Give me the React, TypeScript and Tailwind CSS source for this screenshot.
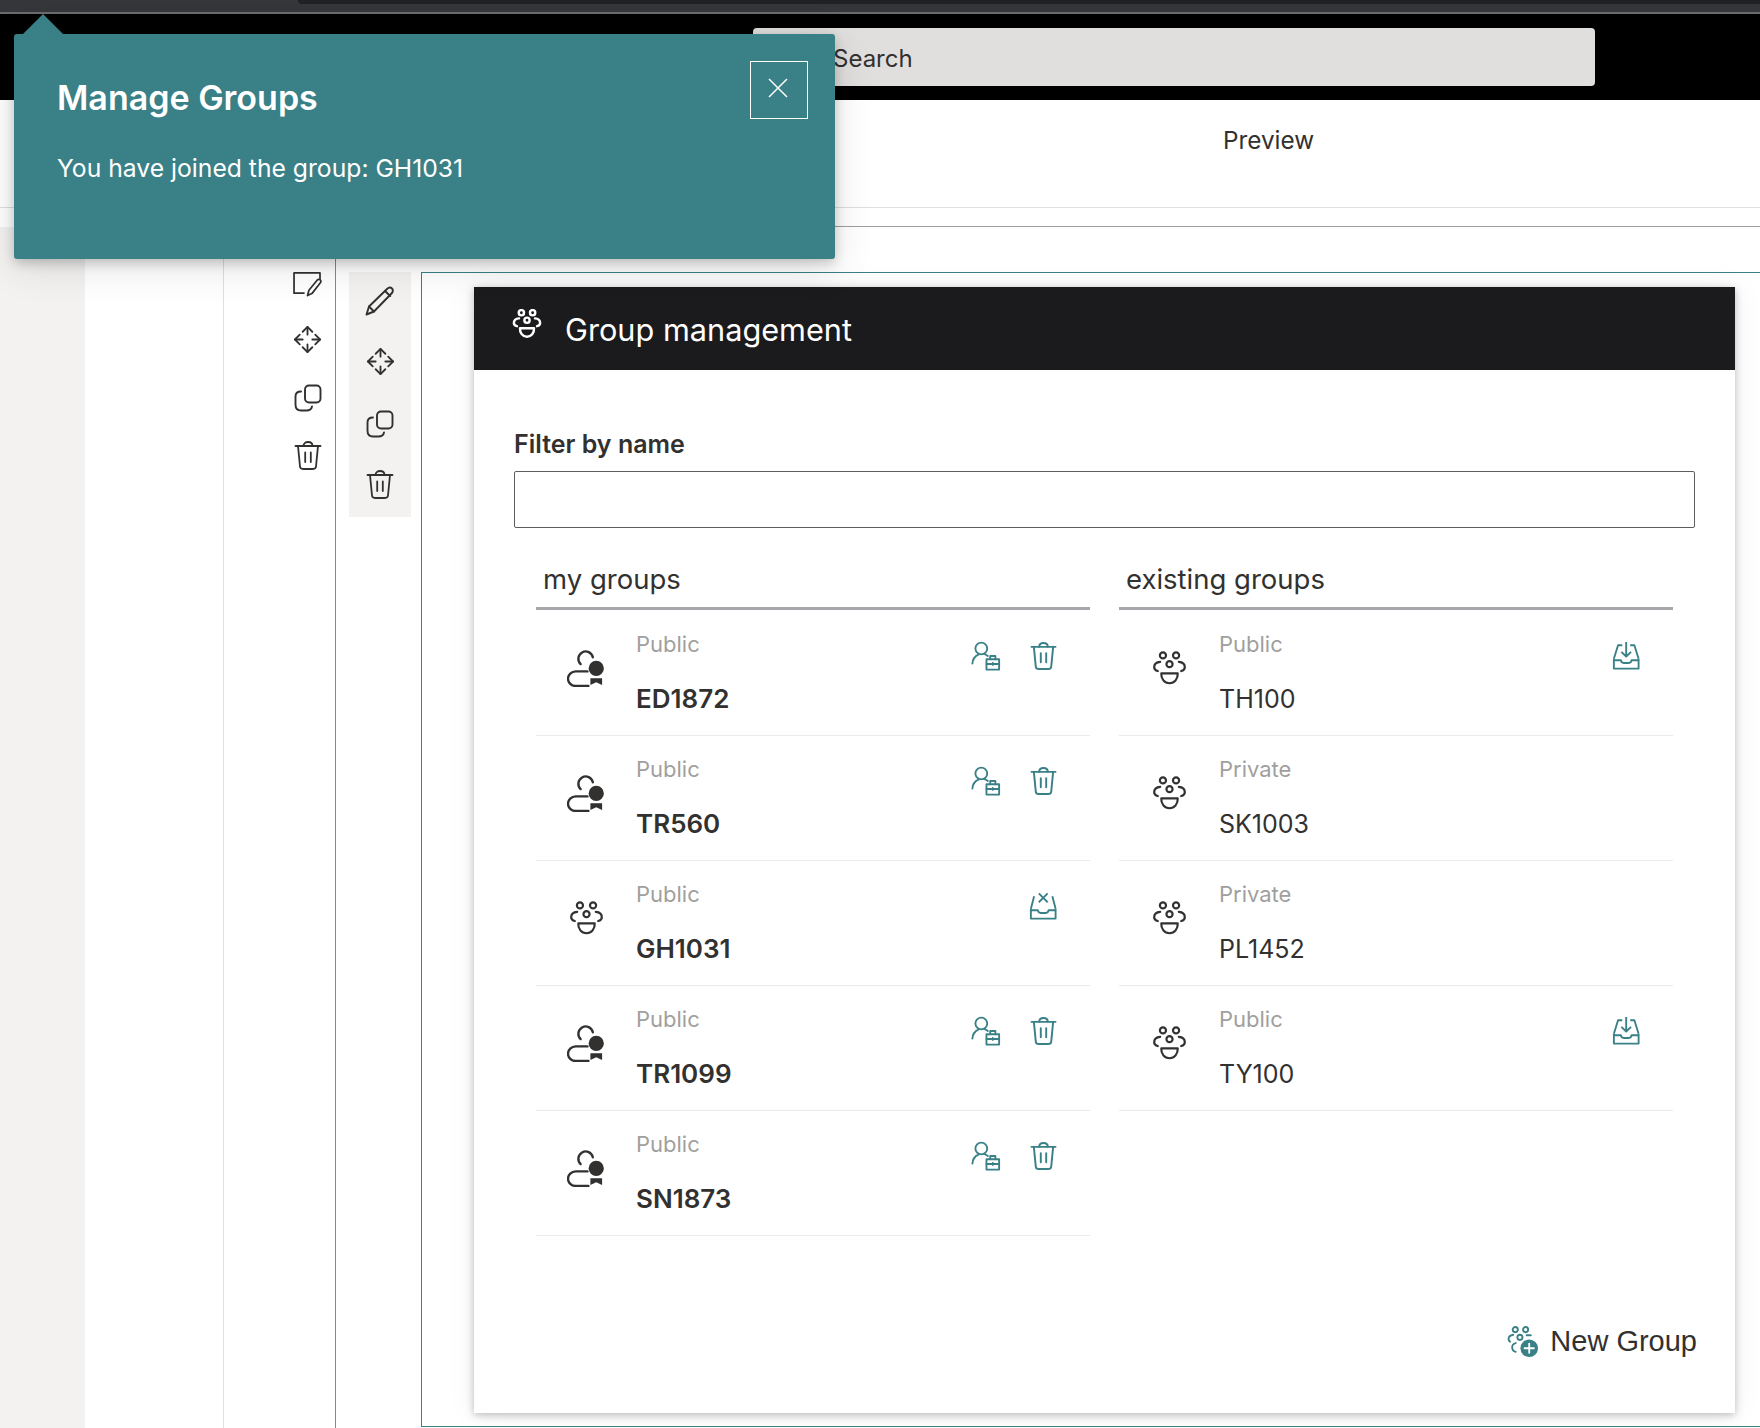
import React from "react";

const s = { fill: "none", stroke: "currentColor", strokeLinecap: "round" as const, strokeLinejoin: "round" as const };

function GroupIcon({ className = "", w = 2 }: { className?: string; w?: number }) {
  return (
    <svg viewBox="0 0 32 32" className={className} {...s} strokeWidth={w}>
      <circle cx="10" cy="4" r="2.800" />
      <circle cx="22" cy="4" r="2.800" />
      <circle cx="16" cy="12" r="2.800" />
      <path d="M7.500 10C4 10.300 2 12.300 2 14.800c0 1.800 1.300 3 3.300 3.500" />
      <path d="M24.500 10c3.500.3 5.500 2.300 5.500 4.800c0 1.800-1.300 3-3.300 3.500" />
      <path d="M8.500 20.500h15c.4 5-3 9-7.500 9s-7.900-4-7.500-9z" />
    </svg>
  );
}

function BadgeIcon({ className = "" }: { className?: string }) {
  return (
    <svg viewBox="0 0 40 40" className={className} {...s} strokeWidth={2.4}>
      <path d="M14 16.500A7.500 7.500 0 1 1 26.500 9.500" />
      <path d="M21 24H9c-4.500 0-8 3.500-8 7.500S4.500 39 9 39h13" />
      <circle cx="30" cy="21" r="7.800" fill="currentColor" stroke="none" />
      <path d="M24 31h12v7l-6-3-6 3z" fill="currentColor" stroke="none" />
    </svg>
  );
}

function PersonCaseIcon({ className = "" }: { className?: string }) {
  return (
    <svg viewBox="0 0 32 32" className={className} {...s} strokeWidth={2}>
      <circle cx="11" cy="8" r="6.300" />
      <path d="M1.500 24c.3-4.500 3-8 6.500-9.500" />
      <path d="M14.500 14c1.500.5 2.500 1.300 3.500 2" />
      <path d="M16.500 19.500h13.500v11h-13.500z" />
      <path d="M20.500 19.500v-3.500h5.500v3.500" />
      <path d="M16.500 24.500h13.500" />
      <path d="M23.200 23.500v2" />
    </svg>
  );
}

function TrashIcon({ className = "", w = 2 }: { className?: string; w?: number }) {
  return (
    <svg viewBox="0 0 28 30" className={className} {...s} strokeWidth={w}>
      <path d="M1.500 5.500h25" />
      <path d="M9.500 5.500C9.500 3 11.500 1.500 14 1.500s4.500 1.500 4.500 4" />
      <path d="M4 5.500l2 20.500c.2 1.700 1.300 2.500 3 2.500h10c1.700 0 2.800-.8 3-2.500l2-20.500" />
      <path d="M11.200 12v9.500M16.800 12v9.500" />
    </svg>
  );
}

function InboxIcon({ kind, className = "" }: { kind: "in" | "x"; className?: string }) {
  return (
    <svg viewBox="0 0 30 30" className={className} {...s} strokeWidth={2} strokeLinecap="butt">
      <path d="M2 18v10.500h26.500V18" />
      <path d="M2 19.500h7.500c.3 2 1.500 3 3 3h5.500c1.500 0 2.700-1 3-3h7.500" />
      {kind === "in" ? (
        <>
          <path d="M2 18L6.500 3.500H11M28.500 18L24 3.500h-4.500" />
          <path d="M15.200 0v15.500M10 10.500l5.200 5 5.200-5" />
        </>
      ) : (
        <>
          <path d="M2 18L5.500 4.500M28.500 18L25 4.500" />
          <path d="M10.500 1.500l9.500 9.500M20 1.500l-9.500 9.500" />
        </>
      )}
    </svg>
  );
}

function NoteIcon({ className = "" }: { className?: string }) {
  return (
    <svg viewBox="0 0 30 26" className={className} {...s} strokeWidth={1.8} strokeLinecap="butt">
      <path d="M28 8V1H1v21h11" />
      <path d="M15 24.500l1.500-5.500L25 8.500c1-1 2.300-1 3.200-.3s1 2 .2 3L20 22z" />
    </svg>
  );
}

function MoveIcon({ className = "" }: { className?: string }) {
  return (
    <svg viewBox="0 0 30 30" className={className} {...s} strokeWidth={1.9}>
      <path d="M15 2v8M15 20v8M2 15h8M20 15h8" />
      <path d="M10 7l5-5 5 5M10 23l5 5 5-5M7 10l-5 5 5 5M23 10l5 5-5 5" />
    </svg>
  );
}

function CopyIcon({ className = "" }: { className?: string }) {
  return (
    <svg viewBox="0 0 28 28" className={className} {...s} strokeWidth={1.9}>
      <rect x="11" y="1.500" width="15.500" height="17" rx="4" />
      <path d="M7 7.500C3.500 7.500 1.500 9.500 1.500 12.500v8c0 3.500 2 6 5.500 6h5.500c3 0 5-1.500 5.500-4" />
    </svg>
  );
}

function PencilIcon({ className = "" }: { className?: string }) {
  return (
    <svg viewBox="0 0 30 30" className={className} {...s} strokeWidth={1.9}>
      <path d="M1.500 28.500l2.500-8L22 3c1.700-1.700 3.800-1.700 5-.5s1.200 3.300-.5 5L9 25.500z" />
      <path d="M4 20.500l5 5M20 5l5.200 5" />
    </svg>
  );
}

function NewGroupIcon({ className = "" }: { className?: string }) {
  return (
    <svg viewBox="0 0 30 30" className={className} {...s} strokeWidth={1.800}>
      <circle cx="8" cy="3.500" r="2.500" />
      <circle cx="18" cy="3.500" r="2.500" />
      <circle cx="12.500" cy="11" r="2.500" />
      <path d="M6 8.500C3 9 1.500 10.500 1.500 12.500c0 1.200.6 2 1.500 2.700" />
      <path d="M19 9h4" />
      <path d="M8.500 16.500C6 17 5 19 5 20.500c0 2 1.500 4 3.500 4.500" />
      <circle cx="21.500" cy="21.500" r="8.500" fill="currentColor" stroke="none" />
      <path d="M21.500 17v9M17 21.500h9" stroke="#fff" />
    </svg>
  );
}

type Item = { vis: string; name: string; icon: "badge" | "group"; actions: "owner" | "leave" | "join" | "none"; bold?: boolean };

const mine: Item[] = [
  { vis: "Public", name: "ED1872", icon: "badge", actions: "owner", bold: true },
  { vis: "Public", name: "TR560", icon: "badge", actions: "owner", bold: true },
  { vis: "Public", name: "GH1031", icon: "group", actions: "leave", bold: true },
  { vis: "Public", name: "TR1099", icon: "badge", actions: "owner", bold: true },
  { vis: "Public", name: "SN1873", icon: "badge", actions: "owner", bold: true },
];

const existing: Item[] = [
  { vis: "Public", name: "TH100", icon: "group", actions: "join" },
  { vis: "Private", name: "SK1003", icon: "group", actions: "none" },
  { vis: "Private", name: "PL1452", icon: "group", actions: "none" },
  { vis: "Public", name: "TY100", icon: "group", actions: "join" },
];

function Row({ item }: { item: Item }) {
  return (
    <div className="flex h-[125px] items-start border-b border-[#edebe9] pl-[30px] pr-[33px]">
      <div className="w-[70px] pt-[37px]">
        {item.icon === "badge" ? (
          <BadgeIcon className="ml-[1px] h-[39px] w-[39px]" />
        ) : (
          <GroupIcon className="ml-[3px] mt-[3px] h-[35px] w-[35px]" />
        )}
      </div>
      <div className="flex-1">
        <div className="mt-[19px] text-[22px] leading-[28px] text-[#a19f9d]">{item.vis}</div>
        <div className={`mt-[27px] leading-[28px] ${item.bold ? "text-[26px] font-semibold" : "text-[25px] font-normal"}`}>{item.name}</div>
      </div>
      <div className="flex items-start gap-[29px] pt-[30px] text-[#3a8087]">
        {item.actions === "owner" && (
          <>
            <PersonCaseIcon className="h-[30px] w-[30px]" />
            <TrashIcon className="h-[30px] w-[27px]" />
          </>
        )}
        {item.actions === "leave" && <InboxIcon kind="x" className="h-[30px] w-[28px]" />}
        {item.actions === "join" && <InboxIcon kind="in" className="h-[30px] w-[28px]" />}
      </div>
    </div>
  );
}

function Column({ title, items }: { title: string; items: Item[] }) {
  return (
    <div className="w-[554px]">
      <div className="mb-[1px] flex h-[69px] items-end border-b-[3px] border-[#a8a6ab] pb-[10px] pl-[7px] text-[27.5px] leading-[36px]">{title}</div>
      {items.map((item) => (
        <Row key={item.name} item={item} />
      ))}
    </div>
  );
}

export default function App() {
  return (
    <div className="relative flex h-[1428px] w-[1760px] flex-col overflow-hidden bg-white font-['Inter',sans-serif] text-[#323130]">
      {/* browser chrome */}
      <div className="h-[14px] shrink-0 border-b-2 border-[#6a6b6e] bg-[#35363a]">
        <div className="ml-[298px] h-[4px] rounded-bl-[6px] bg-[#202124]" />
      </div>

      {/* black app bar */}
      <div className="h-[86px] shrink-0 bg-black pl-[753px] pt-[14px]">
        <div className="flex h-[58px] w-[842px] items-center rounded-[4px] bg-[#e1dfdd] pl-[80px] pt-[4px] text-[24px]">Search</div>
      </div>

      {/* tabs */}
      <div className="flex h-[108px] shrink-0 border-b border-[#e1dfdd] pl-[1223px] pt-[26px] text-[24.3px] leading-[28px]">Preview</div>
      <div className="ml-[335px] h-[19px] shrink-0 border-b border-[#a19f9d]" />

      {/* body */}
      <div className="flex min-h-0 flex-1">
        <div className="w-[85px] shrink-0 bg-[#f3f2f1]" />
        <div className="w-[139px] shrink-0 border-r border-[#e1dfdd]" />
        <div className="flex w-[112px] shrink-0 flex-col items-center border-r border-[#8a8886] pl-[56px] pt-[45px]">
          <NoteIcon className="h-[25px] w-[29px]" />
          <MoveIcon className="mt-[28px] h-[29px] w-[29px]" />
          <CopyIcon className="mt-[30px] h-[28px] w-[28px]" />
          <TrashIcon className="mt-[28px] h-[31px] w-[28px]" w={1.8} />
        </div>
        <div className="ml-[13px] mt-[45px] flex h-[245px] w-[62px] shrink-0 flex-col items-center bg-[#f3f2f1] pt-[14px]">
          <PencilIcon className="h-[30px] w-[30px]" />
          <MoveIcon className="mt-[31px] h-[29px] w-[29px]" />
          <CopyIcon className="mt-[34px] h-[28px] w-[28px]" />
          <TrashIcon className="mt-[31px] h-[31px] w-[28px]" w={1.8} />
        </div>
        <div className="mb-[1px] ml-[10px] mt-[45px] flex-1 border-b border-l border-t border-[#3a8087] pl-[52px] pr-[25px] pt-[14px]">
          {/* card */}
          <div className="flex h-[1126px] flex-col bg-white shadow-[0_2px_8px_rgba(0,0,0,0.25),0_0_30px_rgba(0,0,0,0.06)]">
            <div className="flex h-[83px] shrink-0 items-center gap-[23px] bg-[#1b1a1c] pl-[38px] text-[30.7px] text-white">
              <GroupIcon className="mb-[10px] h-[30px] w-[30px]" w={2.600} />
              <span className="pt-[3px]">Group management</span>
            </div>
            <div className="flex flex-1 flex-col pl-[40px] pr-[40px]">
              <div className="mt-[60px] pt-[1px] text-[25px] font-semibold leading-[26px]">Filter by name</div>
              <input className="mt-[14px] h-[57px] w-full shrink-0 rounded-[2px] border border-[#605e5c] bg-white" />
              <div className="mt-[13px] flex gap-[29px] pl-[22px]">
                <Column title="my groups" items={mine} />
                <Column title="existing groups" items={existing} />
              </div>
              <div className="mr-[-2px] mt-auto flex items-center justify-end gap-[12px] pb-[54px]">
                <NewGroupIcon className="h-[31px] w-[31px] text-[#3a8087]" />
                <span className="font-['Liberation_Sans',sans-serif] text-[29px] leading-[36px]">New Group</span>
              </div>
            </div>
          </div>
        </div>
      </div>

      {/* toast */}
      <div className="absolute left-[14px] top-[34px] h-[225px] w-[821px] rounded-[3px] bg-[#3a8087] pl-[43px] pt-[44px] text-white shadow-[0_4px_12px_rgba(0,0,0,0.2),0_8px_40px_rgba(0,0,0,0.12)]">
        <div className="absolute left-[9px] top-[-20px] h-0 w-0 border-b-[20px] border-l-[20px] border-r-[20px] border-b-[#3a8087] border-l-transparent border-r-transparent" />
        <div className="text-[34px] font-semibold leading-[40px]">Manage Groups</div>
        <div className="mt-[34px] text-[24.7px] leading-[32px]">You have joined the group: GH1031</div>
        <button className="absolute left-[736px] top-[27px] flex h-[58px] w-[58px] items-center justify-center border border-white">
          <svg viewBox="0 0 22 22" className="mb-[4px] mr-[2px] h-[22px] w-[22px]" fill="none" stroke="currentColor" strokeWidth="1.500">
            <path d="M2 2l18 18M20 2L2 20" />
          </svg>
        </button>
      </div>
    </div>
  );
}
